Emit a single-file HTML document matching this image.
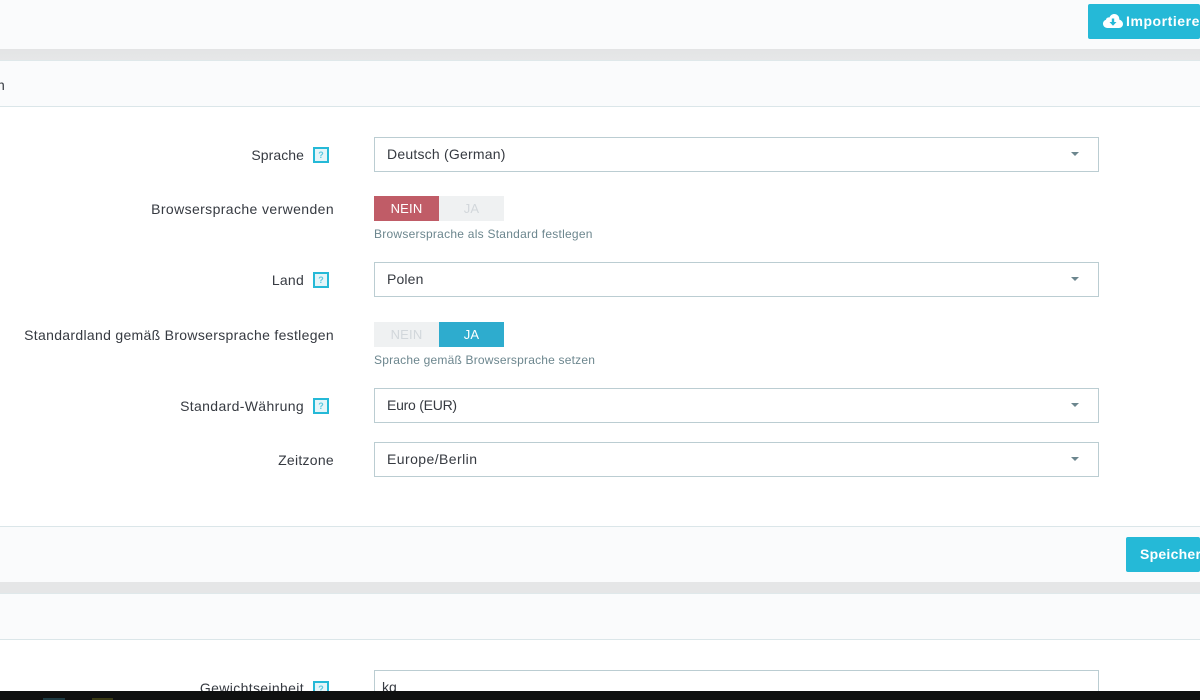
<!DOCTYPE html>
<html><head><meta charset="utf-8"><style>
html,body{margin:0;padding:0;width:1200px;height:700px;overflow:hidden;background:#fff}
body{position:relative;font-family:"Liberation Sans",sans-serif;font-size:14px;color:#363a41}
.a{position:absolute}
.bg{position:absolute;left:0;width:1200px}
.l{position:absolute;text-align:right;white-space:nowrap;line-height:20px;letter-spacing:.31px;color:#363a41}
.h{position:absolute;left:313px;width:12px;height:12px;border:2px solid #25b9d7;background:#e4f5f9;color:#5cc8df;font-size:9px;font-weight:bold;line-height:12px;text-align:center}
.s{position:absolute;left:374px;width:723px;height:33px;border:1px solid #bbcdd2;background:#fff;line-height:32px;text-indent:12px;color:#363a41}
.c:after{content:"";position:absolute;right:19px;top:14px;border:4px solid transparent;border-top:4px solid #6c868e;border-bottom:0}
.t{position:absolute;width:65px;height:25px;line-height:25px;text-align:center;font-size:13px;letter-spacing:.2px}
.d{position:absolute;left:374px;font-size:12px;line-height:16px;color:#6c868e;white-space:nowrap}
.b{position:absolute;background:#25b9d7;border-radius:2px;color:#fff;font-weight:bold;height:35px;line-height:35px;white-space:nowrap}
</style></head><body>
<div class="bg" style="top:0;height:49px;background:#fafbfc"></div>
<div class="bg" style="top:49px;height:11px;background:linear-gradient(#e3e4e5,#e6e7e8)"></div>
<div class="bg" style="top:60px;height:1px;background:#dfe8ea"></div>
<div class="bg" style="top:61px;height:45px;background:#fafbfc"></div>
<div class="bg" style="top:106px;height:1px;background:#dbe6e9"></div>
<div class="a" style="left:-3px;top:75px;line-height:20px">n</div>
<div class="b" style="left:1088px;top:4px;width:112px;overflow:hidden"><svg class="a" style="left:15px;top:9px" width="20" height="16" viewBox="0 0 20 16"><path fill="#fff" d="M4.500 15C2 15 0 13.200 0 10.800 0 8.900 1.200 7.400 3 6.800 3.100 6.500 3.100 6.200 3.300 5.800 4 4.600 5.300 4.200 6.400 4.500 7.400 2.300 9.300 1 11.300 1 14.100 1 16.300 3.200 16.300 6L16.300 6.600C18.500 7.200 20 8.900 20 11 20 13.300 18.100 15 15.800 15Z"/><path fill="#25b9d7" d="M8.800 5.500H11.200V9H13.500L10 12.800 6.500 9H8.800Z"/></svg><span class="a" style="left:38px;top:0;letter-spacing:.55px">Importieren</span></div>

<div class="l" style="right:896px;top:145px;letter-spacing:.07px">Sprache</div><div class="h" style="top:147px">?</div>
<div class="s c" style="top:137px;letter-spacing:.22px">Deutsch (German)</div>
<div class="l" style="right:866px;top:199px;letter-spacing:.39px">Browsersprache verwenden</div>
<div class="t" style="left:374px;top:196px;background:#c05c67;color:#fff">NEIN</div>
<div class="t" style="left:439px;top:196px;background:#eff1f2;color:#d2d7db">JA</div>
<div class="d" style="top:226px;letter-spacing:.25px">Browsersprache als Standard festlegen</div>
<div class="l" style="right:896px;top:270px;letter-spacing:.25px">Land</div><div class="h" style="top:272px">?</div>
<div class="s c" style="top:262px;letter-spacing:.15px">Polen</div>
<div class="l" style="right:866px;top:325px">Standardland gemäß Browsersprache festlegen</div>
<div class="t" style="left:374px;top:322px;background:#eff1f2;color:#d2d7db">NEIN</div>
<div class="t" style="left:439px;top:322px;background:#2eacce;color:#fff">JA</div>
<div class="d" style="top:352px;letter-spacing:.2px">Sprache gemäß Browsersprache setzen</div>
<div class="l" style="right:896px;top:396px;letter-spacing:.35px">Standard-Währung</div><div class="h" style="top:398px">?</div>
<div class="s c" style="top:388px;letter-spacing:-.25px">Euro (EUR)</div>
<div class="l" style="right:866px;top:450px;letter-spacing:.28px">Zeitzone</div>
<div class="s c" style="top:442px;letter-spacing:.43px">Europe/Berlin</div>

<div class="bg" style="top:526px;height:1px;background:#dbe6e9"></div>
<div class="bg" style="top:527px;height:55px;background:#fafbfc"></div>
<div class="b" style="left:1126px;top:537px;width:74px;overflow:hidden"><span class="a" style="left:14px;top:0;letter-spacing:.25px">Speichern</span></div>
<div class="bg" style="top:582px;height:11px;background:#e5e6e7"></div>
<div class="bg" style="top:593px;height:1px;background:#dfe8ea"></div>
<div class="bg" style="top:594px;height:45px;background:#fafbfc"></div>
<div class="bg" style="top:639px;height:1px;background:#dbe6e9"></div>

<div class="l" style="right:896px;top:678px;letter-spacing:.35px">Gewichtseinheit</div><div class="h" style="top:681px">?</div>
<div class="s" style="top:670px;text-indent:7px;height:40px">kg</div>

<div class="bg" style="top:691px;height:9px;background:#0f1010"></div>
<div class="a" style="left:43px;top:698px;width:22px;height:2px;background:#1d3a42"></div>
<div class="a" style="left:92px;top:698px;width:21px;height:2px;background:#3a3a14"></div>
</body></html>
